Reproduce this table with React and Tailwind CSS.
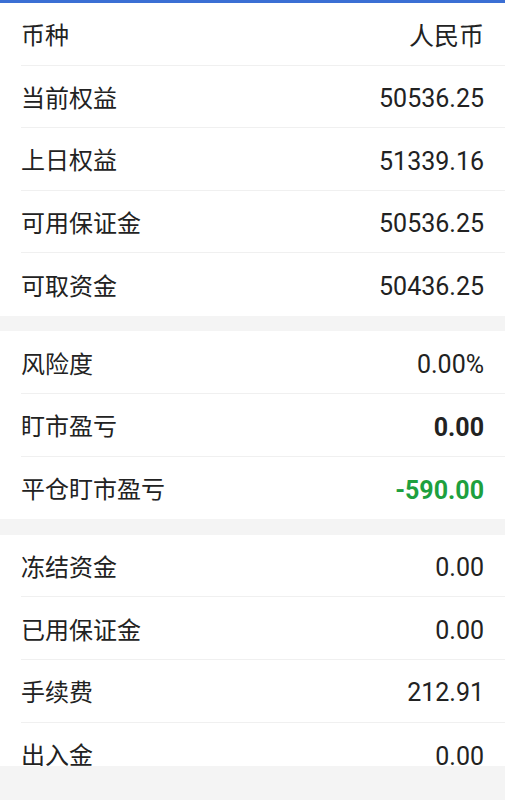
import React from 'react';

const sections = [
  [
    { label: '币种', value: '人民币' },
    { label: '当前权益', value: '50536.25' },
    { label: '上日权益', value: '51339.16' },
    { label: '可用保证金', value: '50536.25' },
    { label: '可取资金', value: '50436.25' },
  ],
  [
    { label: '风险度', value: '0.00%' },
    { label: '盯市盈亏', value: '0.00', bold: true },
    { label: '平仓盯市盈亏', value: '-590.00', bold: true, green: true },
  ],
  [
    { label: '冻结资金', value: '0.00' },
    { label: '已用保证金', value: '0.00' },
    { label: '手续费', value: '212.91' },
    { label: '出入金', value: '0.00' },
  ],
];

function Row({ item, last }) {
  return (
    <div className="pl-[21px] bg-white">
      <div
        className={`h-[62.6px] flex items-center justify-between pr-[21px] pt-[5px] ${
          last ? '' : 'border-b border-[#f0f0f0]'
        }`}
      >
        <span className="text-[24px] text-[#222]">{item.label}</span>
        <span
          className={`text-[25px] ${item.bold ? 'font-bold' : ''} ${item.green ? 'text-[#1ea03e]' : 'text-[#222]'}`}
        >
          {item.value}
        </span>
      </div>
    </div>
  );
}

export default function App() {
  return (
    <div
      className="w-[505px] h-[800px] bg-[#f4f4f4] flex flex-col"
      style={{ fontFamily: 'Roboto, "Noto Sans CJK SC", sans-serif' }}
    >
      <div className="h-[3px] bg-[#3b6fd4] shrink-0" />
      <div className="h-[763px] overflow-hidden flex flex-col gap-[15.5px]">
        {sections.map((rows, i) => (
          <div key={i} className="bg-white shrink-0">
            {rows.map((item, j) => (
              <Row key={item.label} item={item} last={j === rows.length - 1} />
            ))}
          </div>
        ))}
      </div>
    </div>
  );
}
